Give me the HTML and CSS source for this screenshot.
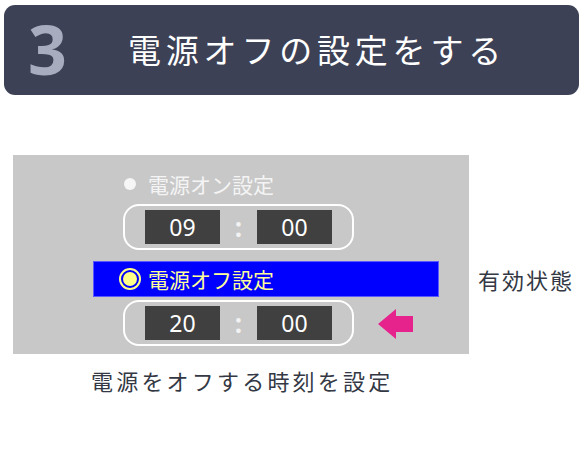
FILE: index.html
```html
<!DOCTYPE html>
<html lang="ja">
<head>
<meta charset="utf-8">
<link rel="stylesheet" href="styles.css">
</head>
<body>
<header class="step">
  <span class="step-num">3</span>
  <h1 class="step-title">電源オフの設定をする</h1>
</header>
<main class="content">
  <div class="figure">
    <div class="panel">
      <div class="opt opt-on">
        <span class="dot"></span>
        <span class="opt-label">電源オン設定</span>
      </div>
      <div class="time-row">
        <div class="time">
          <span class="digits">09</span>
          <span class="colon">:</span>
          <span class="digits">00</span>
        </div>
      </div>
      <div class="opt opt-active">
        <span class="radio"><span class="radio-in"></span></span>
        <span class="opt-label">電源オフ設定</span>
      </div>
      <div class="time-row">
        <div class="time">
          <span class="digits">20</span>
          <span class="colon">:</span>
          <span class="digits">00</span>
        </div>
        <svg class="arrow" width="35" height="30" viewBox="0 0 35 30"><polygon points="0,15 18,0 18,7 35,7 35,23 18,23 18,30" fill="#e6228c"/></svg>
      </div>
    </div>
    <p class="state">有効状態</p>
  </div>
  <p class="caption">電源をオフする時刻を設定</p>
</main>
</body>
</html>
```
FILE: styles.css
```css
html, body {
  margin: 0;
  padding: 0;
  background: #ffffff;
}
body {
  width: 584px;
  height: 456px;
  font-family: "Noto Sans CJK JP", "Noto Sans", sans-serif;
  overflow: hidden;
}
.step {
  margin: 5px 5px 0 4px;
  height: 90px;
  border-radius: 11px;
  background: #3d4155;
  display: flex;
  align-items: center;
  padding-left: 24px;
  box-sizing: border-box;
}
.step-num {
  width: 100px;
  font-family: "Noto Sans", sans-serif;
  font-weight: 700;
  font-size: 68px;
  line-height: 1;
  color: #a8acbf;
  margin-top: -2px;
}
.step-title {
  margin: 0;
  font-weight: 400;
  font-size: 33px;
  letter-spacing: 4.8px;
  color: #ffffff;
  line-height: 1;
  margin-top: -2px;
}
.content {
  padding-top: 60px;
}
.figure {
  display: flex;
  align-items: flex-start;
  margin-left: 13px;
}
.panel {
  width: 456px;
  height: 199px;
  background: #c8c8c8;
  box-sizing: border-box;
  padding-top: 16px;
  display: flex;
  flex-direction: column;
}
.opt {
  display: flex;
  align-items: center;
  height: 26px;
}
.opt-on {
  padding-left: 111px;
}
.opt-on .dot {
  width: 12px;
  height: 12px;
  border-radius: 50%;
  background: #f6f6f6;
  margin-right: 12px;
}
.opt-label {
  font-size: 21px;
  line-height: 26px;
  color: #f4f4f4;
}
.opt-active {
  margin: 11px 0 0 80px;
  width: 346px;
  height: 36px;
  background: #0000ff;
  box-shadow: inset 0 0 0 1px #5a5aff;
  padding-left: 26px;
  box-sizing: border-box;
}
.opt-active .opt-label {
  color: #ffff9a;
}
.radio {
  width: 22px;
  height: 22px;
  box-sizing: border-box;
  border: 2px solid #ffff88;
  border-radius: 50%;
  display: flex;
  align-items: center;
  justify-content: center;
  margin-right: 7px;
}
.radio-in {
  width: 14px;
  height: 14px;
  border-radius: 50%;
  background: #ffff88;
}
.time-row {
  display: flex;
  align-items: center;
  margin-top: 7px;
  padding-left: 110px;
}
.opt-active + .time-row {
  margin-top: 3px;
}
.time {
  width: 231px;
  height: 46px;
  box-sizing: border-box;
  border: 2px solid #ffffff;
  border-radius: 16px;
  display: flex;
  align-items: center;
  padding-left: 20px;
}
.digits {
  width: 75px;
  height: 34px;
  background: #404040;
  color: #ffffff;
  font-family: "Noto Sans", sans-serif;
  font-size: 23px;
  line-height: 34px;
  text-align: center;
}
.colon {
  width: 37px;
  text-align: center;
  color: #f2f2f2;
  font-family: "Noto Sans", sans-serif;
  font-weight: 700;
  font-size: 26px;
  line-height: 34px;
}
.arrow {
  margin-left: 24px;
  margin-top: 1px;
}
.state {
  margin: 109px 0 0 9px;
  font-size: 22px;
  letter-spacing: 2px;
  line-height: 30px;
  color: #333844;
}
.caption {
  margin: 11px 0 0 91px;
  font-size: 22px;
  letter-spacing: 3.2px;
  line-height: 30px;
  color: #333844;
}
```
